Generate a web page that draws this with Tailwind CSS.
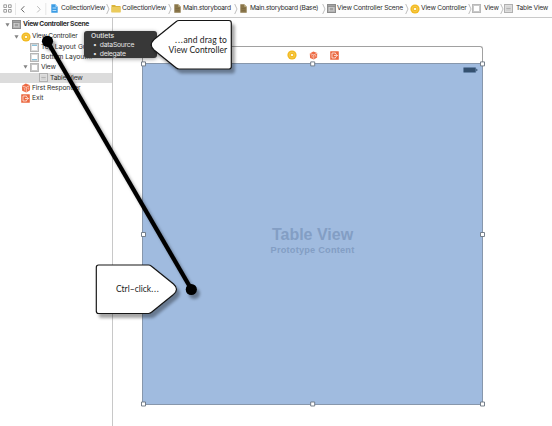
<!DOCTYPE html>
<html lang="en">
<head>
<meta charset="utf-8">
<title>Main.storyboard</title>
<script src="https://cdn.jsdelivr.net/npm/@tailwindcss/browser@4"></script>
</head>
<body class="relative flex h-[426px] w-[552px] flex-col overflow-hidden bg-white font-['Inter','Liberation_Sans',sans-serif] text-[6.7px] text-[#2d2d2d]">
<svg class="hidden">
  <defs>
    <symbol id="chev" viewBox="0 0 4 12"><path d="M.7 1 3 6 .7 11" fill="none" stroke="#a5a5a5" stroke-width=".7"/></symbol>
    <symbol id="vc" viewBox="0 0 10 10"><circle cx="5" cy="5" r="4.6" fill="#f2b91f"/><circle cx="5" cy="5" r="2.8" fill="none" stroke="#f7d469" stroke-width=".6"/><rect x="3.9" y="4" width="2.2" height="2" fill="#fff6d8"/></symbol>
    <symbol id="scene" viewBox="0 0 9 9"><rect x=".5" y=".5" width="8" height="8" fill="#b2b2b2" stroke="#8b8b8b"/><path d="M1 2.2H8" stroke="#777" stroke-width=".8"/><rect x="2.4" y="3.6" width="4.2" height="3.2" fill="#a0a0a0" stroke="#d5d5d5" stroke-width=".6"/></symbol>
    <symbol id="view" viewBox="0 0 9 9"><rect x=".5" y=".5" width="8" height="8" fill="#c9c9c9" stroke="#b8b8b8"/><rect x="2" y="2" width="5" height="5" fill="#fff"/></symbol>
    <symbol id="table" viewBox="0 0 9 9"><rect x=".5" y=".5" width="8" height="8" fill="#dedede" stroke="#b0b0b0"/><path d="M2 3H7M2 6.4H7" stroke="#c8c8c8" stroke-width=".6"/><path d="M2.3 4.7H6.7" stroke="#909090" stroke-width=".7"/></symbol>
    <symbol id="file" viewBox="0 0 7 9"><path d="M.3.3H4.3L6.7 2.8V8.7H.3Z" fill="#8a7649"/><path d="M4.3.3V2.8H6.7Z" fill="#c5b88f"/><path d="M1.5 4.5H5.2M1.5 6.5H5.2" stroke="#75633d" stroke-width=".5"/></symbol>
    <symbol id="cube" viewBox="0 0 10 10"><path d="M.9 2.8 4.8.6 9.1 2.2 9 7.2 5.3 9.5 1.2 7.8Z" fill="#ed6a43"/><path d="M1.2 3 5.3 4.3 8.9 2.5M5.3 4.3V9.2" fill="none" stroke="#fff" stroke-width=".6"/><path d="M2.5 5 3.6 5.4V7.4M6.5 5.4 7.7 4.8V6.8" fill="none" stroke="#ffdacd" stroke-width=".6"/></symbol>
    <symbol id="exit" viewBox="0 0 9 9"><rect x=".2" y=".2" width="8.6" height="8.6" rx=".5" fill="#eb6840"/><path d="M5.6 3.2V2H2V7H5.6V5.8M4 4.5H7.4M6.2 3.2 7.5 4.5 6.2 5.8" fill="none" stroke="#fff" stroke-width=".7"/></symbol>
    <symbol id="tri" viewBox="0 0 6 5"><path d="M.4.4H5.6L3 4.7Z" fill="#858585"/></symbol>
  </defs>
</svg>

<header class="flex h-[18px] shrink-0 items-center border-b border-[#c9c9c9] bg-[#fdfdfd] pl-[3px] whitespace-nowrap">
  <svg class="h-[9px] w-[9px] shrink-0" viewBox="0 0 9 9" fill="none" stroke="#777" stroke-width=".7"><path d="M.8.8H3.5V3.5H.8ZM5.5.8H8.2V3.5H5.5ZM.8 5.5H3.5V8.2H.8ZM5.5 5.5H8.2V8.2H5.5Z"/></svg>
  <svg class="h-[14px] w-[39px] shrink-0" viewBox="0 0 39 14" fill="none"><path d="M3.5 1V13M33.8 1V13" stroke="#ddd" stroke-width=".7"/><path d="M12.3 4.2 9.3 7.3 12.3 10.4" stroke="#555" stroke-width=".9"/><path d="M25.2 4.2 28.2 7.3 25.2 10.4" stroke="#aaa" stroke-width=".8"/></svg>
  <svg class="h-[9px] w-[7px] shrink-0" viewBox="0 0 7 9"><path d="M.3.3H4.5L6.7 2.7V8.7H.3Z" fill="#3b9ce4"/><path d="M4.5.3V2.7H6.7Z" fill="#bfe2fb"/><path d="M1.5 4H5.3M1.5 6.5H5.3" stroke="#d8efff" stroke-width=".8"/></svg>
  <span class="ml-[3px] w-[45px] shrink-0 tracking-[-0.2px]">CollectionView</span>
  <svg class="h-3 w-1 shrink-0"><use href="#chev"/></svg>
  <svg class="ml-px h-[9px] w-[10px] shrink-0" viewBox="0 0 10 9"><path d="M.5 1H4L5 2H9.5V8.3H.5Z" fill="#d9b43b"/><path d="M.5 3H9.5V8.3H.5Z" fill="#ebcb5b"/></svg>
  <span class="ml-[1px] w-[46px] shrink-0 tracking-[-0.2px]">CollectionView</span>
  <svg class="h-3 w-1 shrink-0"><use href="#chev"/></svg>
  <svg class="ml-[2px] h-[9px] w-[7px] shrink-0"><use href="#file"/></svg>
  <span class="ml-[2px] w-[51px] shrink-0 tracking-[-0.27px]">Main.storyboard</span>
  <svg class="h-3 w-1 shrink-0"><use href="#chev"/></svg>
  <svg class="ml-[2px] h-[9px] w-[7px] shrink-0"><use href="#file"/></svg>
  <span class="ml-[3px] w-[72px] shrink-0 tracking-[-0.27px]">Main.storyboard (Base)</span>
  <svg class="h-3 w-1 shrink-0"><use href="#chev"/></svg>
  <svg class="ml-px h-[9px] w-[9px] shrink-0"><use href="#scene"/></svg>
  <span class="ml-[1px] w-[68px] shrink-0 tracking-[-0.2px]">View Controller Scene</span>
  <svg class="h-3 w-1 shrink-0"><use href="#chev"/></svg>
  <svg class="ml-px h-[10px] w-[10px] shrink-0"><use href="#vc"/></svg>
  <span class="ml-[1px] w-[47px] shrink-0 tracking-[-0.2px]">View Controller</span>
  <svg class="h-3 w-1 shrink-0"><use href="#chev"/></svg>
  <svg class="h-[9px] w-[9px] shrink-0"><use href="#view"/></svg>
  <span class="ml-[3px] w-[16px] shrink-0 tracking-[-0.2px]">View</span>
  <svg class="h-3 w-1 shrink-0"><use href="#chev"/></svg>
  <svg class="h-[9px] w-[9px] shrink-0"><use href="#table"/></svg>
  <span class="ml-[3px] w-[34px] shrink-0 tracking-[-0.25px]">Table View</span>
</header>

<main class="flex min-h-0 flex-1">
  <aside class="w-[113px] shrink-0 overflow-hidden border-r border-[#c8c8c8] whitespace-nowrap">
    <div class="flex h-[13px] items-center pl-[5px] font-bold tracking-[-0.32px]"><svg class="h-[4px] w-[5px]" viewBox="0 0 6 5"><use href="#tri"/></svg><svg class="mr-[2px] ml-[2px] h-[9px] w-[9px]"><use href="#scene"/></svg>View Controller Scene</div>
    <div class="flex h-[11px] items-center pl-[14px] tracking-[-0.2px]"><svg class="h-[4px] w-[5px]" viewBox="0 0 6 5"><use href="#tri"/></svg><svg class="mr-[1px] ml-[2px] h-[10px] w-[10px]"><use href="#vc"/></svg>View Controller</div>
    <div class="flex h-[10.2px] items-center pl-[30px]"><svg class="mr-[2px] h-[9px] w-[9px]" viewBox="0 0 9 9"><rect x=".5" y=".5" width="8" height="8" fill="#ddd" stroke="#b5b5b5"/><rect x="2" y="2" width="5" height="5" fill="#fff"/><path d="M2 2.3H7" stroke="#469fc8" stroke-width=".8"/></svg>Top Layout Gu...</div>
    <div class="flex h-[10.2px] items-center pl-[30px]"><svg class="mr-[2px] h-[9px] w-[9px]" viewBox="0 0 9 9"><rect x=".5" y=".5" width="8" height="8" fill="#ddd" stroke="#b5b5b5"/><rect x="2" y="2" width="5" height="5" fill="#fff"/><path d="M2 6.7H7" stroke="#469fc8" stroke-width=".8"/></svg>Bottom Layout...</div>
    <div class="flex h-[10.2px] items-center pl-[23px] tracking-[-0.2px]"><svg class="h-[4px] w-[5px]" viewBox="0 0 6 5"><use href="#tri"/></svg><svg class="mr-[2px] ml-[2px] h-[9px] w-[9px]"><use href="#view"/></svg>View</div>
    <div class="flex h-[10.2px] items-center bg-[#dcdcdc] pl-[39px] tracking-[-0.2px]"><svg class="mr-[2px] h-[9px] w-[9px]"><use href="#table"/></svg>Table View</div>
    <div class="flex h-[10.2px] items-center pl-[21px] tracking-[-0.1px]"><svg class="mr-[1px] h-[10px] w-[10px]"><use href="#cube"/></svg>First Responder</div>
    <div class="flex h-[10.2px] items-center pl-[21px]"><svg class="mr-[2px] h-[9px] w-[9px]"><use href="#exit"/></svg>Exit</div>
  </aside>

  <section class="flex-1 pt-[28px] pl-[29px]">
    <div class="relative w-[341px]">
      <div class="flex h-[17px] items-center justify-center gap-[12px] rounded-t-[3px] border border-b-0 border-[#a1a1a1] bg-white pl-[1px]">
        <svg class="h-[10px] w-[10px]"><use href="#vc"/></svg>
        <svg class="h-[9px] w-[9px]" viewBox="0 0 10 10"><use href="#cube"/></svg>
        <svg class="h-[9px] w-[9px]"><use href="#exit"/></svg>
      </div>
      <div class="flex h-[342px] flex-col items-center border border-[#8797ac] bg-[#a0bbdf] text-[#839ec4]">
        <div class="flex h-[162px] w-full justify-end pt-[3px] pr-[4px]"><svg class="h-[6px] w-[15px]" viewBox="0 0 15 6"><rect x=".4" y=".4" width="12.5" height="5.2" rx="1" fill="#34506f" stroke="#6484aa" stroke-width=".7"/><path d="M13.8 2V4" stroke="#34506f" stroke-width="1"/></svg></div>
        <div class="font-['Liberation_Sans',sans-serif] text-[16px] leading-[18px] font-bold">Table View</div>
        <div class="mt-[1px] font-['Liberation_Sans',sans-serif] text-[9.2px] leading-[11px] font-bold tracking-[0.22px]">Prototype Content</div>
      </div>
      <svg class="absolute -top-px -left-[2px] h-[364px] w-[346px]" viewBox="140 45 346 364" fill="#fff" stroke="#6a7480" stroke-width=".9">
        <path d="M141.5 61.9h4v4h-4ZM310.7 61.9h4v4h-4ZM480.5 61.9h4v4h-4ZM141.5 232.5h4v4h-4ZM480.5 232.5h4v4h-4ZM141.5 402h4v4h-4ZM310.7 402h4v4h-4ZM480.5 402h4v4h-4Z"/>
      </svg>
    </div>
  </section>
</main>

<div class="absolute top-[31px] left-[84px] h-[27px] w-[73px] rounded-[3px] bg-[#383838] pl-[7px] text-[6.8px] leading-[9px] text-[#e4e4e4] shadow-[0_1px_4px_rgba(0,0,0,0.4)]">
  <div class="font-medium">Outlets</div>
  <div class="pl-[2px]">•<span class="pl-[3px] tracking-[-0.25px]">dataSource</span></div>
  <div class="pl-[2px]">•<span class="pl-[3px] tracking-[-0.25px]">delegate</span></div>
</div>

<svg class="absolute inset-0 h-[426px] w-[552px]" viewBox="0 0 552 426">
  <defs><filter id="shade" x="-20%" y="-20%" width="150%" height="150%"><feDropShadow dx="3" dy="4" stdDeviation="1.8" flood-color="#000" flood-opacity=".35"/></filter></defs>
  <g filter="url(#shade)">
    <path d="M47.5 41.5 191.5 289.5" stroke="#000" stroke-width="4.3"/>
    <circle cx="47.5" cy="41.3" r="5.6"/><circle cx="191.3" cy="289.5" r="5.6"/>
  </g>
  <g filter="url(#shade)" fill="#fff" stroke="#161616" stroke-width="1.2">
    <path d="M179 20.5H229Q231.3 20.5 231.3 23V66.5Q231.3 69 229 69H179Q177.5 69 176 67.8L154 50Q148.5 45 154 39.5L176 21.7Q177.5 20.5 179 20.5Z"/>
    <path d="M98.5 265H148.5Q150 265 151.5 266.2L173.5 284Q179.5 289.3 173.5 294.5L151.5 312.3Q150 313.5 148.5 313.5H98.5Q96.3 313.5 96.3 311V267.5Q96.3 265 98.5 265Z"/>
  </g>
</svg>
<div class="absolute top-[36px] left-[160px] w-[67px] text-right font-['Lato','Open_Sans',sans-serif] text-[8.5px] leading-[9.5px] whitespace-nowrap text-[#222]"><span class="tracking-[0.8px]">...</span><span class="tracking-[0.1px]">and drag to</span><br>View Controller</div>
<div class="absolute top-[284px] left-[116px] font-['Lato','Open_Sans',sans-serif] text-[8.5px] leading-[10px] whitespace-nowrap text-[#222]">Ctrl–click<span class="tracking-[0.8px]">...</span></div>
</body>
</html>
